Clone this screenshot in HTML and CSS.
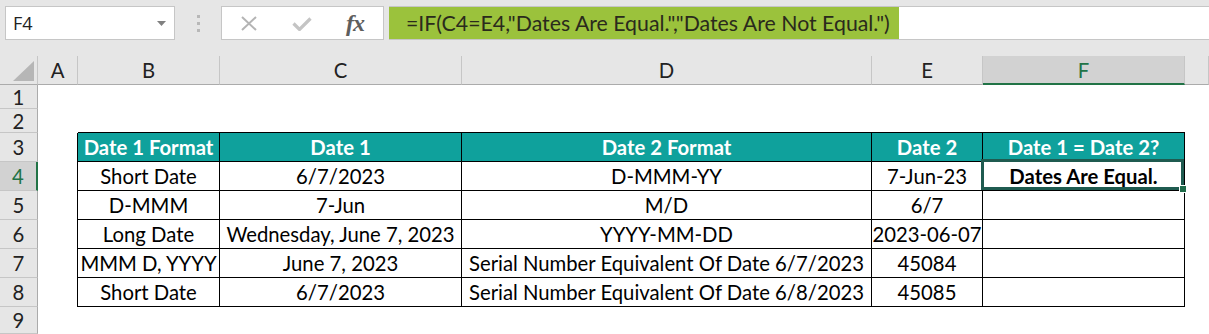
FILE: index.html
```html
<!DOCTYPE html>
<html lang="en">

<head>
    <meta charset="UTF-8">
    <meta name="viewport" content="width=device-width, initial-scale=1.0">
    <title>Date comparison</title>
    <link rel="stylesheet" href="styles.css">
</head>

<body>

    <div class="app">
        <!-- Name box and formula bar -->
        <div class="bar">
            <div class="namebox">
                <span>F4</span>
                <svg class="caret" width="9" height="5" viewBox="0 0 9 5"><path d="M0 0h9L4.5 5z" fill="#808080"/></svg>
            </div>
            <div class="grip"><i></i><i></i><i></i></div>
            <div class="fxbox">
                <svg class="icon-x" width="16" height="15" viewBox="0 0 16 15"><path d="M1 1l14 13M15 1L1 14" stroke="#b4b4b4" stroke-width="2"/></svg>
                <svg class="icon-ok" width="20" height="14" viewBox="0 0 20 14"><path d="M1.5 6.5l6 6L18.5 1.5" stroke="#c4c4c4" stroke-width="3.2" fill="none"/></svg>
                <span class="fx">fx</span>
            </div>
            <div class="formula">
                <span class="formula-text">=IF(C4=E4,"Dates Are Equal.","Dates Are Not Equal.")</span>
            </div>
        </div>

        <!-- Worksheet grid -->
        <div class="sheet">
            <div class="ch corner"></div>
            <div class="ch">A</div>
            <div class="ch">B</div>
            <div class="ch">C</div>
            <div class="ch">D</div>
            <div class="ch">E</div>
            <div class="ch sel">F</div>
            <div class="ch"></div>

            <div class="rh">1</div>
            <div class="c"></div><div class="c"></div><div class="c"></div><div class="c"></div><div class="c"></div><div class="c"></div><div class="c"></div>

            <div class="rh">2</div>
            <div class="c"></div>
            <div class="c top"></div><div class="c top"></div><div class="c top"></div><div class="c top"></div><div class="c top"></div>
            <div class="c"></div>

            <div class="rh">3</div>
            <div class="c left"></div>
            <div class="t th">Date 1 Format</div>
            <div class="t th">Date 1</div>
            <div class="t th">Date 2 Format</div>
            <div class="t th">Date 2</div>
            <div class="t th">Date 1 = Date 2?</div>
            <div class="c"></div>

            <div class="rh sel">4</div>
            <div class="c left"></div>
            <div class="t">Short Date</div>
            <div class="t">6/7/2023</div>
            <div class="t">D-MMM-YY</div>
            <div class="t">7-Jun-23</div>
            <div class="t result active">Dates Are Equal.</div>
            <div class="c"></div>

            <div class="rh">5</div>
            <div class="c left"></div>
            <div class="t">D-MMM</div>
            <div class="t">7-Jun</div>
            <div class="t">M/D</div>
            <div class="t">6/7</div>
            <div class="t"></div>
            <div class="c"></div>

            <div class="rh">6</div>
            <div class="c left"></div>
            <div class="t">Long Date</div>
            <div class="t">Wednesday, June 7, 2023</div>
            <div class="t">YYYY-MM-DD</div>
            <div class="t">2023-06-07</div>
            <div class="t"></div>
            <div class="c"></div>

            <div class="rh">7</div>
            <div class="c left"></div>
            <div class="t">MMM D, YYYY</div>
            <div class="t">June 7, 2023</div>
            <div class="t">Serial Number Equivalent Of Date 6/7/2023</div>
            <div class="t">45084</div>
            <div class="t"></div>
            <div class="c"></div>

            <div class="rh">8</div>
            <div class="c left"></div>
            <div class="t">Short Date</div>
            <div class="t">6/7/2023</div>
            <div class="t">Serial Number Equivalent Of Date 6/8/2023</div>
            <div class="t">45085</div>
            <div class="t"></div>
            <div class="c"></div>

            <div class="rh">9</div>
            <div class="c"></div><div class="c"></div><div class="c"></div><div class="c"></div><div class="c"></div><div class="c"></div><div class="c"></div>
        </div>
    </div>

</body>

</html>
```

FILE: styles.css
```css
/* Spreadsheet window */
* {
    box-sizing: border-box;
}

body {
    margin: 0;
    font-family: Lato, "Liberation Sans", sans-serif;
    background-color: #e6e6e6;
    overflow: hidden;
}

.app {
    width: 1209px;
    height: 334px;
}

/* Name box + formula bar */
.bar {
    height: 56px;
    display: flex;
    align-items: flex-start;
    padding-top: 6px;
    padding-left: 5px;
}

.namebox {
    width: 170px;
    height: 34px;
    background-color: #fff;
    border: 1px solid #c6c6c6;
    display: flex;
    align-items: center;
    justify-content: space-between;
    padding: 0 8px 0 7px;
    font-family: "Open Sans", sans-serif;
    font-size: 18px;
    color: #222;
}

.grip {
    width: 46px;
    height: 34px;
    display: flex;
    flex-direction: column;
    align-items: center;
    justify-content: center;
    gap: 4px;
}

.grip i {
    width: 3px;
    height: 3px;
    background-color: #b8b8b8;
}

.fxbox {
    width: 163px;
    height: 34px;
    background-color: #fff;
    border: 1px solid #c6c6c6;
    display: flex;
    align-items: center;
    padding-left: 19px;
}

.icon-ok {
    margin-left: 35px;
    margin-top: 2px;
}

.fx {
    margin-left: 34px;
    font-family: "Liberation Serif", serif;
    font-style: italic;
    font-weight: bold;
    font-size: 24px;
    color: #5e5e5e;
    letter-spacing: -1px;
}

.formula {
    flex: 1;
    height: 34px;
    margin-left: 5px;
    background-color: #fff;
    border-top: 1px solid #c6c6c6;
    border-bottom: 1px solid #c6c6c6;
    display: flex;
}

.formula-text {
    background-color: #9bc23c;
    color: #2a2a1c;
    font-size: 21.3px;
    padding: 0 9px 0 17px;
    display: flex;
    align-items: center;
}

/* Sheet grid */
.sheet {
    display: grid;
    grid-template-columns: 38px 40px 142px 242px 410px 111px 202px 1fr;
    grid-template-rows: 29px 24px 24px repeat(6, 29px) 1fr;
    height: 278px;
    font-size: 20.3px;
    color: #000;
}

.sheet > div {
    display: flex;
    align-items: center;
    justify-content: center;
    white-space: nowrap;
}

.ch {
    background-color: #e6e6e6;
    border-right: 1px solid #c6c6c6;
    border-bottom: 1px solid #ababab;
    color: #222;
}

.rh {
    background-color: #e6e6e6;
    border-right: 1px solid #ababab;
    border-bottom: 1px solid #c6c6c6;
    color: #222;
}

.ch.sel {
    background-color: #d2d2d2;
    border-bottom: 2px solid #217346;
    color: #217346;
}

.rh.sel {
    background-color: #d2d2d2;
    border-right: 2px solid #217346;
    color: #217346;
}

.corner {
    position: relative;
}

.corner::after {
    content: "";
    position: absolute;
    left: 13px;
    top: 5px;
    border-left: 21px solid transparent;
    border-bottom: 20px solid #b6b6b6;
}

.c {
    background-color: #fff;
}

.c.top {
    border-bottom: 1px solid #000;
}

.c.left {
    border-right: 1px solid #000;
}

.t {
    background-color: #fff;
    border-right: 1px solid #000;
    border-bottom: 1px solid #000;
}

.th {
    background-color: #0fa19c;
    color: #fff;
    font-weight: bold;
}

.result {
    font-weight: bold;
}

/* Active cell frame and fill handle */
.active {
    position: relative;
}

.active::before {
    content: "";
    position: absolute;
    top: -3px;
    left: -2px;
    right: 0;
    bottom: 0;
    border: 3px solid #1f5b50;
}

.active::after {
    content: "";
    position: absolute;
    right: -3px;
    bottom: -3px;
    width: 6px;
    height: 6px;
    background-color: #1f6b4a;
    border: 1px solid #fff;
}
```
